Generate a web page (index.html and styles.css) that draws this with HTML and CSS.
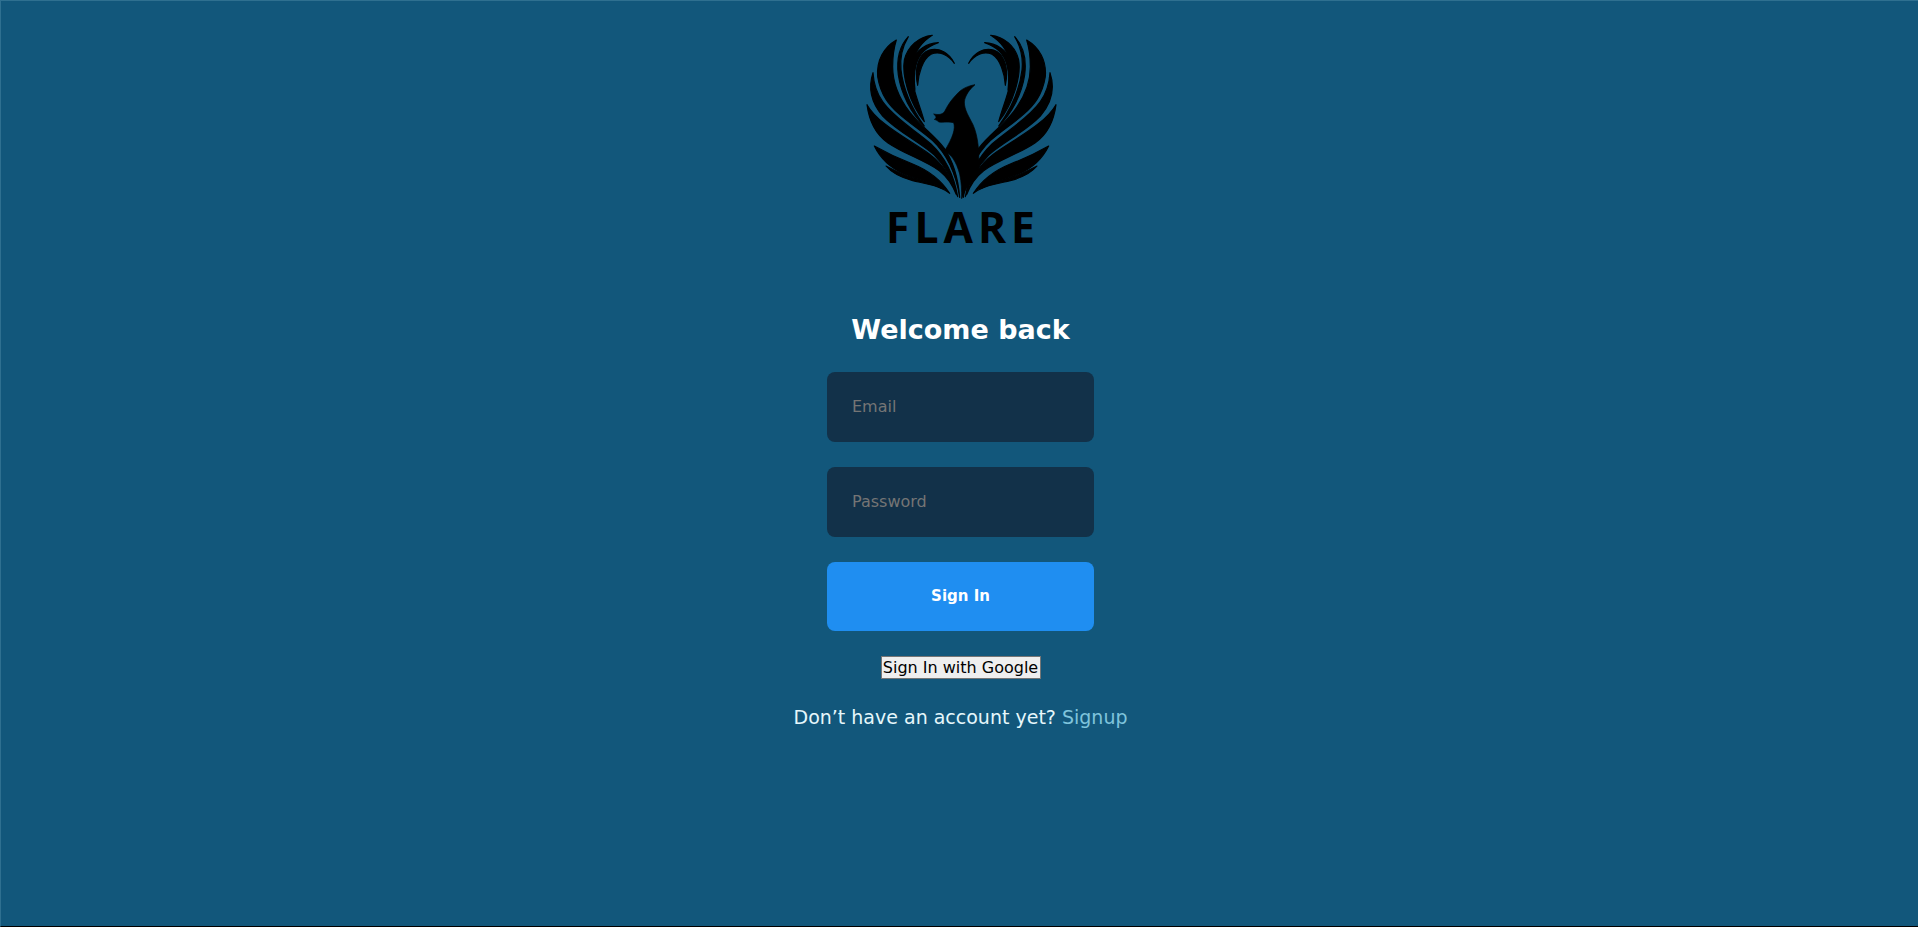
FILE: index.html
```html
<!DOCTYPE html>
<html lang="en">
<head>
<meta charset="utf-8">
<title>Flare</title>
<link rel="stylesheet" href="styles.css">
</head>
<body>
<main class="page">
  <svg class="logo" viewBox="0 0 720 720" role="img" aria-label="Flare logo">
    <defs>
      <g id="wing" class="wing">
        <path d="M340 130C325 98 295 82 265 90C235 100 218 140 230 196C232 160 245 118 270 103C295 92 322 105 340 130Z"/>
        <path d="M292 68C258 70 226 88 214 122C206 150 212 180 222 210C216 160 224 116 250 92C262 80 276 74 292 68Z"/>
        <path d="M274 46C234 50 200 78 190 120C182 165 205 250 250 305C232 240 205 190 214 130C222 95 244 64 274 46Z"/>
        <path d="M202 50C176 78 166 120 172 165C180 220 210 280 250 318C208 260 186 200 180 150C176 110 184 80 202 50Z"/>
        <path d="M166 60C128 82 106 122 110 170C114 195 122 218 135 238C165 285 230 322 275 362C315 400 345 460 356 532C352 480 340 430 310 385C280 345 240 320 205 275C175 235 155 190 155 140C155 110 158 85 166 60Z"/>
        <path d="M96 158C82 200 88 245 125 288C170 335 235 365 280 405C310 435 335 475 350 530C338 460 310 410 270 372C225 332 160 295 125 245C108 220 98 190 96 158Z"/>
        <path d="M78 254C84 300 100 340 140 368C190 402 250 420 295 452C318 470 335 495 346 524C332 480 315 440 265 402C190 350 110 310 78 254Z"/>
        <path d="M100 378C130 395 170 415 215 432C260 450 300 480 326 520C290 492 240 482 190 462C150 445 118 415 100 378Z"/>
        <path d="M135 438C155 462 185 474 215 482C250 490 280 495 304 506C275 490 240 482 205 470C180 462 158 450 135 438Z"/>
      </g>
    </defs>
    <use href="#wing"/>
    <use href="#wing" transform="translate(723 0) scale(-1 1)"/>
    <path class="bird" d="M402 194C380 198 362 206 348 222C334 236 322 252 312 272C306 282 298 286 278 282C288 290 286 296 280 298C288 300 290 304 294 306C306 308 324 304 338 308C344 326 336 352 310 394C330 402 346 424 356 462C362 490 362 512 362 536C372 510 390 480 412 450C416 400 412 350 396 314C384 290 370 270 370 246C372 226 386 208 402 194Z"/>
    <text class="logo-word" x="366" y="668" text-anchor="middle">FLARE</text>
  </svg>
  <h1 class="title">Welcome back</h1>
  <form class="form">
    <input class="field" type="email" placeholder="Email">
    <input class="field" type="password" placeholder="Password">
    <button class="submit" type="button">Sign In</button>
    <button class="google" type="button">Sign In with Google</button>
    <p class="signup">Don’t have an account yet? <a href="#">Signup</a></p>
  </form>
</main>
</body>
</html>
```
FILE: styles.css
```css
* { box-sizing: border-box; }
html, body { margin: 0; height: 100%; }
body {
  background: #12577b;
  font-family: "DejaVu Sans", sans-serif;
  color: #fff;
}
.page {
  height: 927px;
  padding: 19px 0 0 2px;
  border-left: 1px solid #2f7090;
  border-top: 1px solid #2f7090;
  border-bottom: 1px solid #000;
  display: flex;
  flex-direction: column;
  align-items: center;
  overflow: hidden;
}
.logo { width: 240px; height: 240px; display: block; fill: #000; }
.wing { stroke: #000; stroke-width: 3.5px; stroke-linejoin: round; }
.bird { stroke: #000; stroke-width: 2px; }
.logo-word {
  font-family: "Open Sans", sans-serif;
  font-weight: 700;
  font-size: 128px;
  letter-spacing: 15px;
  fill: #000;
}
.title {
  margin: 51px 0 0;
  font-size: 27px;
  line-height: 38px;
  font-weight: 700;
  text-align: center;
}
.form {
  margin-top: 23px;
  display: flex;
  flex-direction: column;
  align-items: center;
}
.field {
  width: 267px;
  height: 70px;
  margin-bottom: 25px;
  padding: 0 25px 2px;
  border: 0;
  border-radius: 8px;
  background: #123149;
  color: #fff;
  font: 16px "DejaVu Sans", sans-serif;
}
.field::placeholder { color: #757575; }
.submit {
  width: 267px;
  height: 69px;
  padding: 0 0 2px;
  border: 0;
  border-radius: 8px;
  background: #1f8ef1;
  color: #fff;
  font: 700 15px "DejaVu Sans", sans-serif;
}
.google {
  margin-top: 25px;
  min-width: 160px;
  height: 23px;
  padding: 0 1px;
  background: #efefef;
  border: 1px solid #767676;
  color: #000;
  font: 16px "DejaVu Sans", sans-serif;
}
.signup {
  margin: 25px 0 0;
  font-size: 19px;
  line-height: 27px;
  color: #e6f7fb;
}
.signup a { color: #7fc4dc; text-decoration: none; }
```
